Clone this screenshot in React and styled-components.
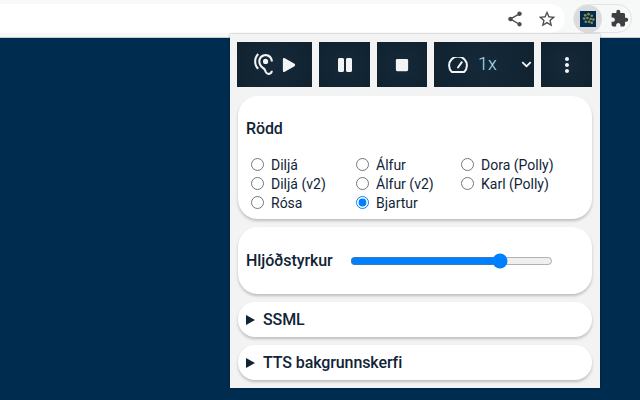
import React from "react";
import styled, { createGlobalStyle } from "styled-components";
import { MdHearing, MdShare, MdStarBorder, MdExtension, MdMoreVert } from "react-icons/md";
import { FaPlay, FaPause, FaStop, FaChevronDown } from "react-icons/fa";

const GlobalStyle = createGlobalStyle`
  html, body {
    margin: 0;
    height: 100%;
    overflow: hidden;
    background-color: #002c4f;
  }
`;

const Page = styled.div`
  position: relative;
  width: 640px;
  height: 400px;
  background-color: #002c4f;
  font-family: Roboto, sans-serif;
  color: #0f2437;
`;

const Toolbar = styled.div`
  height: 38px;
  box-sizing: border-box;
  padding: 4px 0 4px 0;
  display: flex;
  align-items: flex-start;
  gap: 8px;
  background-color: #f7f8f8;
  border-bottom: 1px solid #c9cbcc;
`;

const AddressBar = styled.div`
  width: 565px;
  height: 29px;
  box-sizing: border-box;
  display: flex;
  align-items: center;
  justify-content: flex-end;
  gap: 13px;
  padding-right: 8px;
  background-color: #ffffff;
  border-radius: 0 15px 15px 0;
  color: #4a4c4f;
`;

const ExtensionPill = styled.div`
  display: flex;
  align-items: center;
  height: 29px;
  width: 59px;
  box-sizing: border-box;
  border: 1px solid #e2e3e4;
  border-radius: 15px;
  color: #3c4043;
`;

const ActiveExtension = styled.div`
  width: 28px;
  height: 28px;
  margin-right: 8px;
  flex: none;
  display: flex;
  align-items: center;
  justify-content: center;
  border-radius: 50%;
  background-color: #d9dbdc;
`;

const ExtensionLogo = styled.div`
  width: 16px;
  height: 16px;
  display: flex;
  align-items: center;
  justify-content: center;
  background-color: #002c4f;
`;

const Popup = styled.div`
  position: absolute;
  left: 230px;
  top: 34px;
  width: 370px;
  height: 354px;
  box-sizing: border-box;
  padding: 8px 8px 0 7px;
  display: flex;
  flex-direction: column;
  background-color: #f3f3f3;
  box-shadow: 0 0 2px rgba(0, 0, 0, 0.35);
`;

const Controls = styled.div`
  display: flex;
  gap: 7px;
  height: 45px;
  margin-bottom: 9px;
`;

const ControlButton = styled.button`
  width: ${(props) => props.$width}px;
  height: 45px;
  padding: 0;
  flex: none;
  display: flex;
  align-items: center;
  justify-content: center;
  gap: ${(props) => props.$gap || 0}px;
  border: none;
  color: #f2f4f5;
  background: radial-gradient(circle, #15293a 0%, #10222f 100%);
`;

const ListenButton = styled(ControlButton)`
  padding-right: 3px;
`;

const SpeedButton = styled(ControlButton)`
  justify-content: flex-start;
  padding-left: 14px;
`;

const SpeedLabel = styled.span`
  font-family: Roboto, sans-serif;
  font-size: 18px;
  line-height: 18px;
  font-weight: 300;
  text-align: left;
  color: #b5e3fa;
  margin: 0 0 2px 10px;
  width: 43px;
`;

const Card = styled.section`
  margin-left: 1px;
  box-sizing: border-box;
  width: 354px;
  background-color: #ffffff;
  border-radius: ${(props) => props.$radius || 20}px;
  box-shadow: 0 2px 3px rgba(0, 0, 0, 0.22);
  margin-bottom: 8px;
`;

const VoiceCard = styled(Card)`
  height: 123px;
  padding: 23px 8px 0;
`;

const SectionTitle = styled.h2`
  margin: 0;
  font-size: 16px;
  line-height: 19px;
  font-weight: 500;
  letter-spacing: -0.1px;
`;

const VoiceGrid = styled.div`
  margin-top: 17px;
  display: grid;
  grid-template-columns: 105px 105px 105px;
  grid-template-rows: repeat(3, 19px);
  grid-auto-flow: column;
`;

const VoiceOption = styled.label`
  display: flex;
  align-items: center;
  font-size: 14px;
  line-height: 19px;
  white-space: nowrap;
`;

const VoiceName = styled.span`
  margin-top: 2px;
`;

const VoiceRadio = styled.input`
  width: 13px;
  height: 13px;
  margin: 0 7px 0 5px;
  flex: none;
  accent-color: #007fff;
`;

const VolumeCard = styled(Card)`
  height: 67px;
  padding: 0 8px;
  display: flex;
  align-items: center;
  gap: 17px;
`;

const VolumeSlider = styled.input`
  width: 203px;
  margin: 0;
  accent-color: #007fff;
`;

const Disclosure = styled(Card)`
  height: 35px;
  padding-left: 8px;
  display: flex;
  align-items: center;
  gap: 8px;
  font-size: 16px;
  font-weight: 500;
  letter-spacing: -0.1px;
`;

const GaugeIcon = () => (
  <svg width="20" height="16" viewBox="0 0 20 16" fill="none" stroke="currentColor" strokeWidth="2" strokeLinejoin="round" strokeLinecap="round">
    <path d="M3.9 15H16.1A8.9 8.9 0 1 0 3.9 15Z" />
    <path d="M10 10.5L13.8 5.2" />
  </svg>
);

const DisclosureCaret = () => (
  <svg width="9" height="10" viewBox="0 0 9 10" fill="currentColor">
    <path d="M0 0L9 5L0 10Z" />
  </svg>
);

const voices = [
  { name: "Diljá" },
  { name: "Diljá (v2)" },
  { name: "Rósa" },
  { name: "Álfur" },
  { name: "Álfur (v2)" },
  { name: "Bjartur", checked: true },
  { name: "Dora (Polly)" },
  { name: "Karl (Polly)" },
];

const logoDots = [
  [3, 3], [6, 2], [9, 3.5], [2, 6], [5, 5.5], [8, 6.5], [10.5, 7], [3.5, 9], [6.5, 9], [9, 10],
];

const App = () => {
  return (
    <Page>
      <GlobalStyle />
      <Toolbar>
        <AddressBar>
          <MdShare size={18} />
          <MdStarBorder size={20} />
        </AddressBar>
        <ExtensionPill>
          <ActiveExtension>
            <ExtensionLogo>
              <svg width="13" height="13" viewBox="0 0 12 12" fill="#8f8c45">
                {logoDots.map(([x, y]) => (
                  <circle key={`${x}-${y}`} cx={x} cy={y} r="1.2" />
                ))}
              </svg>
            </ExtensionLogo>
          </ActiveExtension>
          <MdExtension size={19} />
        </ExtensionPill>
      </Toolbar>
      <Popup>
        <Controls>
          <ListenButton $width={75} $gap={6}>
            <MdHearing size={25} />
            <FaPlay size={14} />
          </ListenButton>
          <ControlButton $width={51}>
            <FaPause size={16} />
          </ControlButton>
          <ControlButton $width={50}>
            <FaStop size={14} />
          </ControlButton>
          <SpeedButton $width={100}>
            <GaugeIcon />
            <SpeedLabel>1x</SpeedLabel>
            <FaChevronDown size={11} />
          </SpeedButton>
          <ControlButton $width={51}>
            <MdMoreVert size={24} />
          </ControlButton>
        </Controls>
        <VoiceCard>
          <SectionTitle>Rödd</SectionTitle>
          <VoiceGrid>
            {voices.map((voice) => (
              <VoiceOption key={voice.name}>
                <VoiceRadio type="radio" name="voice" defaultChecked={voice.checked} />
                <VoiceName>{voice.name}</VoiceName>
              </VoiceOption>
            ))}
          </VoiceGrid>
        </VoiceCard>
        <VolumeCard>
          <SectionTitle>Hljóðstyrkur</SectionTitle>
          <VolumeSlider type="range" min="0" max="100" defaultValue="76" />
        </VolumeCard>
        <Disclosure $radius={17}>
          <DisclosureCaret />
          SSML
        </Disclosure>
        <Disclosure $radius={17}>
          <DisclosureCaret />
          TTS bakgrunnskerfi
        </Disclosure>
      </Popup>
    </Page>
  );
};

export default App;
